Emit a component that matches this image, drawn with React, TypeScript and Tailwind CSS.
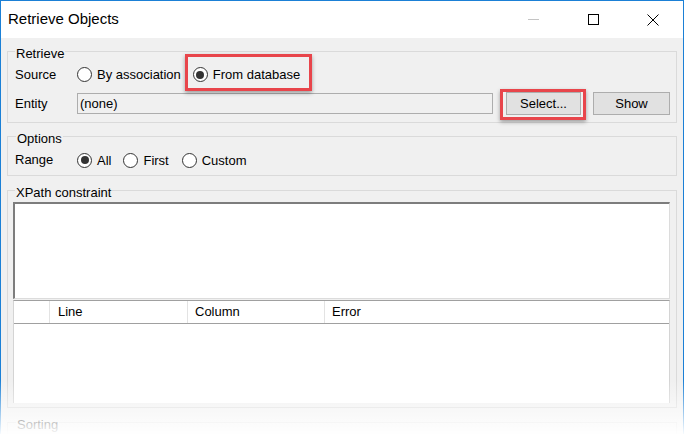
import React from 'react';

const font = { fontFamily: '"Liberation Sans", Arial, sans-serif' };

// Win32-style radio button
const Radio = ({ label, checked = false }: { label: string; checked?: boolean }) => (
  <div className="flex items-center">
    <span className="w-[15px] h-[15px] rounded-full border border-[#333] bg-white flex items-center justify-center">
      {checked && <span className="w-[8px] h-[8px] rounded-full bg-[#333]" />}
    </span>
    <span className="ml-[5px] leading-[15px]">{label}</span>
  </div>
);

const Group = ({
  title,
  className,
  legendClass,
  children,
}: {
  title: string;
  className?: string;
  legendClass?: string;
  children?: React.ReactNode;
}) => (
  <fieldset className={`border border-[#dadada] ${className ?? ''}`}>
    <legend className={`px-[1px] pt-[4px] leading-[15px] ${legendClass ?? ''}`}>{title}</legend>
    {children}
  </fieldset>
);

const Button = ({ label, className }: { label: string; className?: string }) => (
  <div
    className={`h-[23px] flex items-center justify-center bg-[#e1e1e1] border border-[#adadad] ${className ?? ''}`}
  >
    {label}
  </div>
);

export default function App() {
  return (
    <div className="relative w-[684px] h-[434px] overflow-hidden bg-white text-[13px] text-black" style={font}>
      <div className="h-full flex flex-col border-x border-t border-[#1b80d6]">
        {/* Title bar */}
        <div className="h-[37px] shrink-0 flex items-center bg-white">
          <span className="ml-[7px] text-[15px] text-[#000]">Retrieve Objects</span>
          <div className="ml-auto flex h-full">
            <div className="w-[60px] flex items-center justify-center">
              <svg width="11" height="11" viewBox="0 0 11 11">
                <path d="M0 5.5H11" stroke="#c4c4c4" strokeWidth="1" />
              </svg>
            </div>
            <div className="w-[60px] flex items-center justify-center">
              <svg width="11" height="11" viewBox="0 0 11 11">
                <rect x="0.5" y="0.5" width="10" height="10" fill="none" stroke="#000" strokeWidth="1" />
              </svg>
            </div>
            <div className="w-[60px] flex items-center justify-center">
              <svg width="12" height="12" viewBox="0 0 12 12">
                <path d="M0.5 0.5L11.5 11.5M11.5 0.5L0.5 11.5" stroke="#000" strokeWidth="1" />
              </svg>
            </div>
          </div>
        </div>

        {/* Dialog body */}
        <div className="flex-1 bg-[#f0f0f0] px-[6px] pt-[4px] flex flex-col">
          <Group title="Retrieve" className="pl-[7px] pr-[6px] pb-[7px]">
            <div className="mt-[3px] h-[21px] flex items-center">
              <span className="w-[62px]">Source</span>
              <Radio label="By association" />
              <div className="relative ml-[12px]">
                <Radio label="From database" checked />
                <div className="absolute left-[-8px] right-[-12px] top-[-13px] bottom-[-9px] border-[3px] border-[#e8454b] shadow-[0_2px_4px_rgba(0,0,0,0.35)]" />
              </div>
            </div>
            <div className="mt-[7px] h-[23px] flex items-center">
              <span className="w-[62px]">Entity</span>
              <div className="flex-1 h-[21px] flex items-center pl-[2px] border border-[#adadad] bg-[#f0f0f0]">
                (none)
              </div>
              <div className="relative ml-[13px]">
                <Button label="Select..." className="w-[75px]" />
                <div className="absolute left-[-6px] right-[-5px] top-[-3px] bottom-[-5px] border-[3px] border-[#e8454b] shadow-[0_2px_4px_rgba(0,0,0,0.35)]" />
              </div>
              <Button label="Show" className="ml-[12px] w-[77px]" />
            </div>
          </Group>

          <Group title="Options" className="mt-[4px] pl-[7px] pr-[6px] pb-[5px]" legendClass="ml-[1px]">
            <div className="mt-[4px] h-[20px] flex items-center">
              <span className="w-[62px]">Range</span>
              <Radio label="All" checked />
              <div className="ml-[12px]">
                <Radio label="First" />
              </div>
              <div className="ml-[13px]">
                <Radio label="Custom" />
              </div>
            </div>
          </Group>

          <Group title="XPath constraint" className="mt-[5px] pl-[5px] pr-[6px] pb-[4px]" legendClass="ml-[2px]">
            <div className="mt-[2px] h-[97px] bg-white border-t-2 border-l-2 border-t-[#7d7d7d] border-l-[#7d7d7d] border-r border-b border-r-[#dcdcdc] border-b-[#dcdcdc]" />
            <div className="mt-[1px] h-[103px] bg-white border-t border-t-[#a0a0a0] border-x border-x-[#d4d4d4] flex flex-col">
              <div className="h-[23px] flex border-b border-b-[#a0a0a0]">
                <div className="w-[36px] border-r border-r-[#e3e3e3]" />
                <div className="w-[138px] flex items-center pl-[8px] border-r border-r-[#e3e3e3]">Line</div>
                <div className="w-[137px] flex items-center pl-[7px] border-r border-r-[#e3e3e3]">Column</div>
                <div className="flex-1 flex items-center pl-[7px]">Error</div>
              </div>
            </div>
          </Group>

          <Group title="Sorting" className="mt-[5px] pl-[7px] pr-[6px] h-[60px]" legendClass="ml-[1px]" />
        </div>
      </div>

      {/* bottom fade */}
      <div className="absolute left-0 right-0 bottom-0 h-[54px] pointer-events-none bg-[linear-gradient(to_bottom,rgba(255,255,255,0),rgba(255,255,255,0.96))]" />
    </div>
  );
}
